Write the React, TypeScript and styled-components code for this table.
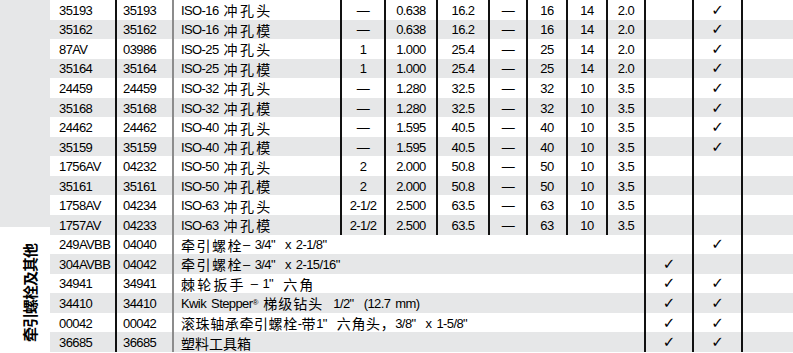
import React from 'react';
import styled, { createGlobalStyle, css } from 'styled-components';

const GlobalStyle = createGlobalStyle`
  html, body { margin: 0; padding: 0; background: #ffffff; }
  body {
    font-family: "Liberation Sans", "Noto Sans CJK SC", sans-serif;
    color: #000;
  }
`;

const STRIPE = '#e6e7e8';
const ROW_H = 19.55;

type Line = 'dark' | 'light' | 'none';
type Align = 'left' | 'center';

const Sheet = styled.div`
  width: 793px;
  height: 353px;
  overflow: hidden;
  display: flex;
  flex-direction: column;
`;

const Section = styled.section`
  display: flex;
`;

const SideLabel = styled.div<{ $tone: 'gray' | 'white' }>`
  flex: 0 0 50px;
  box-sizing: border-box;
  display: flex;
  align-items: center;
  justify-content: center;
  ${(p) =>
    p.$tone === 'gray'
      ? css`
          background: ${STRIPE};
          margin-bottom: 8px;
        `
      : css`
          background: #fff;
          padding-left: 8px;
        `}
`;

const VerticalText = styled.span`
  writing-mode: vertical-rl;
  text-orientation: sideways;
  transform: rotate(180deg);
  font-family: "Noto Sans CJK SC", sans-serif;
  font-weight: 700;
  font-size: 15px;
  letter-spacing: -1px;
  line-height: 1;
  white-space: nowrap;
`;

const Rows = styled.div`
  flex: 1;
  display: flex;
  flex-direction: column;
`;

const Row = styled.div<{ $cols: string; $shaded: boolean }>`
  display: grid;
  grid-template-columns: ${(p) => p.$cols};
  height: ${ROW_H}px;
  background: ${(p) => (p.$shaded ? STRIPE : '#fff')};
`;

const Cell = styled.div<{ $line: Line; $align: Align; $pad?: number }>`
  box-sizing: border-box;
  display: flex;
  align-items: center;
  justify-content: ${(p) => (p.$align === 'center' ? 'center' : 'flex-start')};
  padding-left: ${(p) => (p.$align === 'left' ? `${p.$pad ?? 7}px` : '0')};
  padding-top: 1px;
  font-size: 13px;
  letter-spacing: -0.6px;
  word-spacing: 2px;
  line-height: 1;
  white-space: pre;
  overflow: hidden;
  border-right: ${(p) =>
    p.$line === 'dark' ? '2px solid #111' : p.$line === 'light' ? '2px solid #8c8c8c' : 'none'};
`;

const Han = styled.span<{ $spacing: number }>`
  font-family: "Noto Sans CJK SC", sans-serif;
  font-size: 14px;
  letter-spacing: ${(p) => p.$spacing}px;
`;

const Sup = styled.sup`
  font-size: 8px;
  line-height: 0;
  vertical-align: 5px;
  letter-spacing: 0;
`;

const Check = styled.span`
  font-family: "DejaVu Sans", sans-serif;
  font-size: 15px;
  letter-spacing: 0;
  line-height: 1;
`;

const SPLIT_RE = /([\u2E80-\u9FFF\u3000-\u303F\uFF00-\uFFEF]+|®)/;
const HAN_RE = /[\u2E80-\u9FFF\u3000-\u303F\uFF00-\uFFEF]/;

function renderText(text: string, spacing: number) {
  return text
    .split(SPLIT_RE)
    .filter(Boolean)
    .map((part, i) => {
      if (part === '®') return <Sup key={i}>®</Sup>;
      if (HAN_RE.test(part))
        return (
          <Han key={i} $spacing={spacing}>
            {part}
          </Han>
        );
      return <span key={i}>{part}</span>;
    });
}

const PUNCH_COLS = '67px 57px 168px 44px 52px 52px 38px 40px 40px 38px 48px 49px 50px';
const MISC_COLS = '67px 57px 472px 48px 49px 50px';

type PunchRow = [string, string, string, string, string, string, string, string, string, string, boolean];

const punchRows: PunchRow[] = [
  ['35193', '35193', 'ISO-16 冲孔头', '—', '0.638', '16.2', '—', '16', '14', '2.0', true],
  ['35162', '35162', 'ISO-16 冲孔模', '—', '0.638', '16.2', '—', '16', '14', '2.0', true],
  ['87AV', '03986', 'ISO-25 冲孔头', '1', '1.000', '25.4', '—', '25', '14', '2.0', true],
  ['35164', '35164', 'ISO-25 冲孔模', '1', '1.000', '25.4', '—', '25', '14', '2.0', true],
  ['24459', '24459', 'ISO-32 冲孔头', '—', '1.280', '32.5', '—', '32', '10', '3.5', true],
  ['35168', '35168', 'ISO-32 冲孔模', '—', '1.280', '32.5', '—', '32', '10', '3.5', true],
  ['24462', '24462', 'ISO-40 冲孔头', '—', '1.595', '40.5', '—', '40', '10', '3.5', true],
  ['35159', '35159', 'ISO-40 冲孔模', '—', '1.595', '40.5', '—', '40', '10', '3.5', true],
  ['1756AV', '04232', 'ISO-50 冲孔头', '2', '2.000', '50.8', '—', '50', '10', '3.5', false],
  ['35161', '35161', 'ISO-50 冲孔模', '2', '2.000', '50.8', '—', '50', '10', '3.5', false],
  ['1758AV', '04234', 'ISO-63 冲孔头', '2-1/2', '2.500', '63.5', '—', '63', '10', '3.5', false],
  ['1757AV', '04233', 'ISO-63 冲孔模', '2-1/2', '2.500', '63.5', '—', '63', '10', '3.5', false],
];

type MiscRow = { part: string; code: string; desc: string; spacing: number; a: boolean; b: boolean };

const miscRows: MiscRow[] = [
  { part: '249AVBB', code: '04040', desc: '牵引螺栓– 3/4"  x 2-1/8"', spacing: 1.5, a: false, b: true },
  { part: '304AVBB', code: '04042', desc: '牵引螺栓– 3/4"  x 2-15/16"', spacing: 1.5, a: true, b: false },
  { part: '34941', code: '34941', desc: '棘轮扳手 – 1"  六角', spacing: 2.2, a: true, b: true },
  { part: '34410', code: '34410', desc: 'Kwik Stepper® 梯级钻头  1/2"  (12.7 mm)', spacing: 1, a: true, b: true },
  { part: '00042', code: '00042', desc: '滚珠轴承牵引螺栓-带1"  六角头，3/8"  x 1-5/8"', spacing: 0.6, a: true, b: true },
  { part: '36685', code: '36685', desc: '塑料工具箱', spacing: 0, a: true, b: true },
];

const CheckCell: React.FC<{ on: boolean; line: Line }> = ({ on, line }) => (
  <Cell $line={line} $align="center">
    {on ? <Check>✓</Check> : null}
  </Cell>
);

export default function App() {
  return (
    <>
      <GlobalStyle />
      <Sheet>
        <Section>
          <SideLabel $tone="gray" />
          <Rows>
            {punchRows.map((r, i) => (
              <Row key={r[0]} $cols={PUNCH_COLS} $shaded={i % 2 === 1}>
                <Cell $line="dark" $align="left" $pad={9}>{r[0]}</Cell>
                <Cell $line="light" $align="left" $pad={6}>{r[1]}</Cell>
                <Cell $line="dark" $align="left" $pad={7}>{renderText(r[2], 2.3)}</Cell>
                <Cell $line="dark" $align="center">{r[3]}</Cell>
                <Cell $line="dark" $align="center">{r[4]}</Cell>
                <Cell $line="dark" $align="center">{r[5]}</Cell>
                <Cell $line="dark" $align="center">{r[6]}</Cell>
                <Cell $line="dark" $align="center">{r[7]}</Cell>
                <Cell $line="dark" $align="center">{r[8]}</Cell>
                <Cell $line="dark" $align="center">{r[9]}</Cell>
                <CheckCell on={false} line="dark" />
                <CheckCell on={r[10]} line="dark" />
                <Cell $line="none" $align="center" />
              </Row>
            ))}
          </Rows>
        </Section>
        <Section>
          <SideLabel $tone="white">
            <VerticalText>牵引螺栓及其他</VerticalText>
          </SideLabel>
          <Rows>
            {miscRows.map((r, i) => (
              <Row key={r.part} $cols={MISC_COLS} $shaded={i % 2 === 1}>
                <Cell $line="dark" $align="left" $pad={9}>{r.part}</Cell>
                <Cell $line="light" $align="left" $pad={6}>{r.code}</Cell>
                <Cell $line="dark" $align="left" $pad={7}>{renderText(r.desc, r.spacing)}</Cell>
                <CheckCell on={r.a} line="dark" />
                <CheckCell on={r.b} line="dark" />
                <Cell $line="none" $align="center" />
              </Row>
            ))}
          </Rows>
        </Section>
      </Sheet>
    </>
  );
}
